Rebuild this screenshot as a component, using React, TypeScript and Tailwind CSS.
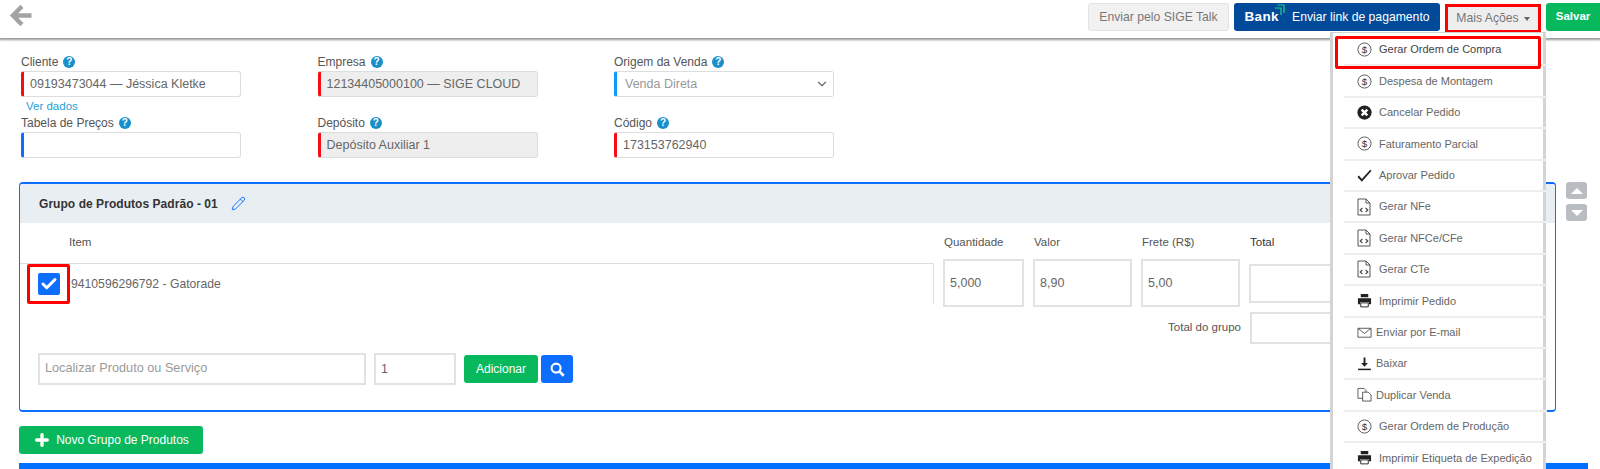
import { Check, ChevronDown, Pencil, Plus } from "lucide-react";
import type { ReactNode } from "react";

function Help() {
  return (
    <span className="ml-[5px] inline-flex h-[12px] w-[12px] items-center justify-center rounded-full bg-[#1a8fc9] text-[10px] font-bold leading-none text-white">
      ?
    </span>
  );
}

function Field({
  label,
  value,
  accent = "red",
  disabled,
  select,
}: {
  label: string;
  value?: string;
  accent?: "red" | "blue" | "sky";
  disabled?: boolean;
  select?: boolean;
}) {
  const accentClass =
    accent === "red" ? "border-l-[#f40f17]" : accent === "blue" ? "border-l-[#0d6efd]" : "border-l-[#0a9bff]";
  return (
    <div className="w-[220px]">
      <div className="flex h-[20px] items-center pt-[1px] text-[12px] text-[#555]">
        {label}
        <Help />
      </div>
      <div
        className={`flex h-[26px] items-center justify-between rounded-[3px] border border-l-[3px] border-[#ddd] pl-[6px] pr-[4px] text-[12.5px] ${accentClass} ${
          disabled ? "bg-[#eee] text-[#666]" : "bg-white text-[#666]"
        } ${select ? "bg-[#f2f2f2] pl-[8px] text-[#999]" : ""}`}
      >
        {value}
        {select && <ChevronDown className="h-[14px] w-[14px] text-[#777]" strokeWidth={2.5} />}
      </div>
    </div>
  );
}

function Box({ className, children }: { className: string; children?: ReactNode }) {
  return <div className={`flex items-center border-2 border-[#e2e2e2] bg-white text-[12.5px] text-[#666] ${className}`}>{children}</div>;
}

const outline = "h-[15px] w-[15px] fill-none stroke-[#444]";

function Dollar() {
  return (
    <svg viewBox="0 0 16 16" className={outline}>
      <circle cx="8" cy="8" r="7" strokeWidth="0.9" />
      <text x="8" y="11.6" textAnchor="middle" fontSize="10.5" fill="#333" stroke="none" fontFamily="Liberation Sans">
        $
      </text>
    </svg>
  );
}

function Code() {
  return (
    <svg viewBox="0 0 14 18" className="h-[18px] w-[14px] fill-none stroke-[#444]" strokeWidth="0.9">
      <path d="M1 1h8l4 4v12H1z" />
      <path d="M9 1v4h4" />
      <path d="M5.4 10 3.2 12l2.2 2M8.6 10l2.2 2-2.2 2" strokeWidth="1.1" />
    </svg>
  );
}

function Cancel() {
  return (
    <svg viewBox="0 0 16 16" className="h-[15px] w-[15px]">
      <circle cx="8" cy="8" r="7.6" fill="#222" />
      <path d="m5 5 6 6m0-6-6 6" stroke="#fff" strokeWidth="2.6" />
    </svg>
  );
}

function Tick() {
  return (
    <svg viewBox="0 0 16 16" className="h-[15px] w-[15px] fill-none stroke-[#222]" strokeWidth="2">
      <path d="m1.2 8.8 4 4.4L14.8 2.4" />
    </svg>
  );
}

function Printer() {
  return (
    <svg viewBox="0 0 16 16" className="h-[15px] w-[15px]">
      <path d="M4 1h8v3.5H4zM1 5.5h14v6.5h-2.5V9.5h-9V12H1z" fill="#222" />
      <path d="M4 10.5h8v4.3H4z" fill="#fff" stroke="#222" strokeWidth="1" />
    </svg>
  );
}

function Mail() {
  return (
    <svg viewBox="0 0 16 16" className={outline} strokeWidth="0.9">
      <path d="M1 3.5h14v9.5H1z" />
      <path d="m1 3.5 7 5.5 7-5.5" />
    </svg>
  );
}

function Download() {
  return (
    <svg viewBox="0 0 16 16" className="h-[15px] w-[15px]">
      <path d="M7 1.5h2v6h2.6L8 11.5l-3.6-4H7z" fill="#222" />
      <path d="M1.2 14.3h13.6" stroke="#222" strokeWidth="1.6" />
    </svg>
  );
}

function Copy() {
  return (
    <svg viewBox="0 0 16 16" className={outline} strokeWidth="0.9">
      <path d="M1 1.5h6.5l2 2V12H1z" />
      <path d="M6 5.5h6l3 3v6.5H6z" fill="#fff" />
    </svg>
  );
}

const actions: { label: string; icon: ReactNode; tight?: boolean; strong?: boolean }[] = [
  { label: "Gerar Ordem de Compra", icon: <Dollar />, strong: true },
  { label: "Despesa de Montagem", icon: <Dollar /> },
  { label: "Cancelar Pedido", icon: <Cancel /> },
  { label: "Faturamento Parcial", icon: <Dollar /> },
  { label: "Aprovar Pedido", icon: <Tick /> },
  { label: "Gerar NFe", icon: <Code /> },
  { label: "Gerar NFCe/CFe", icon: <Code /> },
  { label: "Gerar CTe", icon: <Code /> },
  { label: "Imprimir Pedido", icon: <Printer /> },
  { label: "Enviar por E-mail", icon: <Mail />, tight: true },
  { label: "Baixar", icon: <Download />, tight: true },
  { label: "Duplicar Venda", icon: <Copy />, tight: true },
  { label: "Gerar Ordem de Produção", icon: <Dollar /> },
  { label: "Imprimir Etiqueta de Expedição", icon: <Printer /> },
];

function ActionsMenu() {
  return (
    <div className="absolute left-[1330px] top-[32px] z-20 h-[437px] w-[216px] border-x-[3px] border-t border-[#d4d4d4] bg-white pt-[2px]">
      {actions.map((a) => (
        <div
          key={a.label}
          className="-mr-[4px] ml-[11px] flex h-[31.4px] items-center whitespace-nowrap border-b-2 border-[#eee] pl-[13px] text-[11px] text-[#666]"
        >
          <span className={`flex w-[15px] shrink-0 ${a.tight ? "mr-[4px]" : "mr-[7px]"}`}>{a.icon}</span>
          <span className={a.strong ? "text-[#444]" : ""}>{a.label}</span>
        </div>
      ))}
      <div className="absolute left-[2px] top-[3px] h-[33px] w-[206px] rounded-[2px] border-[3px] border-[#f00]" />
    </div>
  );
}

function TopBar() {
  return (
    <div className="relative z-10 flex h-[38px] items-start justify-between bg-white shadow-[0_1px_2px_1px_rgba(70,70,70,0.55)]">
      <svg viewBox="0 0 24 24" className="ml-[9px] mt-[4px] h-[23px] w-[24px] fill-none stroke-[#a3a3a3]" strokeWidth="4.5">
        <path d="M23 12H4M13 2.5 3.5 12l9.5 9.5" />
      </svg>
      <div className="mt-[3px] flex items-start text-[12.2px]">
        <button className="flex h-[28px] w-[141px] items-center justify-center rounded-[3px] border border-[#e3e3e3] bg-[#f1f1f1] text-[#777]">
          Enviar pelo SIGE Talk
        </button>
        <button className="ml-[5px] flex h-[28px] w-[206px] items-center justify-center rounded-[3px] bg-[#004a99] text-white">
          <span className="relative mr-[13px] text-[13.5px] font-bold tracking-[0.4px]">
            Bank
            <svg viewBox="0 0 11 12" className="absolute -right-[6px] -top-[3px] h-[12px] w-[11px] fill-none stroke-[#22d08c]" strokeWidth="1.2">
              <path d="M1 4h6v7M3.5 1H10v8" />
            </svg>
          </span>
          Enviar link de pagamento
        </button>
        <div className="ml-[5px] mt-[1px] flex h-[29px] w-[96px] items-center justify-center border-[3px] border-[#f00] bg-[#eee] text-[#777]">
          Mais Ações
          <span className="ml-[5px] h-0 w-0 border-x-[3.5px] border-t-[4px] border-x-transparent border-t-[#666]" />
        </div>
        <button className="ml-[5px] flex h-[28px] w-[54px] items-center justify-center rounded-l-[3px] bg-[#08b85c] text-[11.5px] font-bold text-white">
          Salvar
        </button>
      </div>
    </div>
  );
}

function SearchGlyph() {
  return (
    <svg viewBox="0 0 16 16" className="h-[15px] w-[15px] fill-none stroke-white">
      <circle cx="6.5" cy="6.5" r="4.8" strokeWidth="2.2" />
      <path d="m10 10 4.6 4.6" strokeWidth="3" />
    </svg>
  );
}

function ProductGroup() {
  return (
    <div className="relative mt-[24px] h-[230px] w-[1537px] overflow-hidden rounded-[4px] border border-[#0d6efd] border-b-2 border-t-2">
      <div className="flex h-[39px] items-center bg-[#e9eef3] pl-[19px] text-[12px] font-bold tracking-[0.05px] text-[#333]">
        Grupo de Produtos Padrão - 01
        <Pencil className="ml-[13px] h-[15px] w-[15px] text-[#0d6efd]" strokeWidth={1.5} />
      </div>

      <div className="flex h-[34px] text-[11.5px] text-[#555]">
        <div className="w-[924px] pl-[49px] pt-[11px]">Item</div>
        <div className="w-[90px] pt-[11px]">Quantidade</div>
        <div className="w-[108px] pt-[11px]">Valor</div>
        <div className="w-[108px] pt-[11px]">Frete (R$)</div>
        <div className="pt-[11px] text-[#333]">Total</div>
      </div>

      <div className="mt-[2px] flex items-start">
        <div className="relative mt-[4px] flex h-[41px] w-[914px] items-center border-r border-t border-[#ddd] pl-[51px] text-[12.2px] text-[#666]">
          9410596296792 - Gatorade
          <div className="absolute left-[7px] top-0 flex h-[40px] w-[43px] items-center justify-center rounded-[2px] border-[3px] border-[#f00] bg-white">
            <span className="flex h-[22px] w-[22px] items-center justify-center rounded-[2px] bg-[#0d6efd]">
              <Check className="h-[18px] w-[18px] text-white" strokeWidth={4} />
            </span>
          </div>
        </div>
        <Box className="ml-[9px] h-[48px] w-[81px] pl-[5px]">5,000</Box>
        <Box className="ml-[9px] h-[48px] w-[99px] pl-[5px]">8,90</Box>
        <Box className="ml-[9px] h-[48px] w-[99px] pl-[5px]">5,00</Box>
        <Box className="ml-[9px] mt-[5px] h-[39px] w-[120px] border" />
      </div>

      <div className="mt-[5px] flex items-center justify-end pr-[185px]">
        <span className="mr-[9px] text-[11.5px] text-[#555]">Total do grupo</span>
        <Box className="h-[32px] w-[120px]" />
      </div>

      <div className="ml-[18px] mt-[9px] flex items-center">
        <Box className="h-[32px] w-[328px] pl-[5px] text-[12.7px] text-[#999]">Localizar Produto ou Serviço</Box>
        <Box className="ml-[8px] h-[32px] w-[82px] pl-[5px]">1</Box>
        <button className="ml-[8px] h-[28px] w-[74px] rounded-[3px] bg-[#08b85c] text-[12px] font-medium text-white">Adicionar</button>
        <button className="ml-[3px] flex h-[28px] w-[32px] items-center justify-center rounded-[3px] bg-[#0d6efd]">
          <SearchGlyph />
        </button>
      </div>
    </div>
  );
}

export default function App() {
  return (
    <div className="relative h-[469px] overflow-hidden bg-white font-['Liberation_Sans',Arial,sans-serif]">
      <TopBar />
      <ActionsMenu />

      <div className="pl-[19px] pt-[13px]">
        <div className="ml-[2px] flex gap-[76.5px]">
          <div>
            <Field label="Cliente" value="09193473044 — Jéssica Kletke" />
            <div className="ml-[5px] mt-[4px] h-[11px] text-[11.5px] leading-[11px] text-[#2a9fd6]">Ver dados</div>
          </div>
          <Field label="Empresa" value="12134405000100 — SIGE CLOUD" disabled />
          <Field label="Origem da Venda" value="Venda Direta" accent="sky" select />
        </div>
        <div className="ml-[2px] flex gap-[76.5px]">
          <Field label="Tabela de Preços" accent="blue" />
          <Field label="Depósito" value="Depósito Auxiliar 1" disabled />
          <Field label="Código" value="173153762940" />
        </div>

        <div className="relative">
          <ProductGroup />
          <div className="absolute left-[1547px] top-0 flex flex-col gap-[5px]">
            <span className="flex h-[17px] w-[21px] items-center justify-center rounded-[3px] bg-[#b9bdc2]">
              <span className="h-0 w-0 border-x-[6px] border-b-[6px] border-x-transparent border-b-white" />
            </span>
            <span className="flex h-[17px] w-[21px] items-center justify-center rounded-[3px] bg-[#b9bdc2]">
              <span className="h-0 w-0 border-x-[6px] border-t-[6px] border-x-transparent border-t-white" />
            </span>
          </div>
        </div>

        <button className="mt-[14px] flex h-[28px] w-[184px] items-center justify-center rounded-[3px] bg-[#08b85c] text-[12px] font-medium text-white">
          <Plus className="mr-[5px] h-[18px] w-[18px]" strokeWidth={4.5} />
          Novo Grupo de Produtos
        </button>
        <div className="mt-[9px] h-[6px] w-[1569px] bg-[#0071ff]" />
      </div>
    </div>
  );
}
